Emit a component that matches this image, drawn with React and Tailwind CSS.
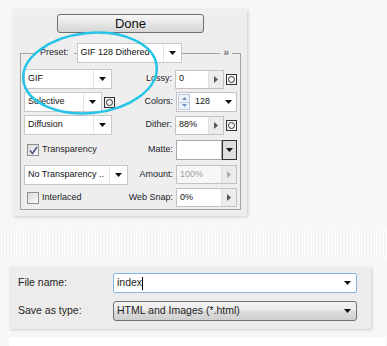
import React from "react";

const Down = ({ c = "#111" }) => (
  <svg width="7" height="4" viewBox="0 0 7 4"><polygon points="0,0 7,0 3.5,4" fill={c} /></svg>
);
const Right = ({ c = "#666" }) => (
  <svg width="4" height="7" viewBox="0 0 4 7"><polygon points="0,0 4,3.5 0,7" fill={c} /></svg>
);

function Drop({ w, text }) {
  return (
    <div className={`flex h-[20px] ${w} border border-[#c8c8c8] bg-white`}>
      <div className="flex-1 flex items-center pl-[3px] border-r border-[#e4e4e4] whitespace-nowrap overflow-hidden text-[#111]">{text}</div>
      <div className="w-[17px] flex items-center justify-center"><Down /></div>
    </div>
  );
}

function Step({ w, text, disabled }) {
  return (
    <div className={`flex h-[19px] ${w} border border-[#c2c2c2] bg-white`}>
      <div className={`flex-1 flex items-center pl-[3px] ${disabled ? "text-[#a0a0a0] bg-[#f7f7f7]" : "text-[#111]"}`}>{text}</div>
      <div className="w-[15px] flex items-center justify-center bg-[#ececec] border-l border-[#e0e0e0]"><Right c={disabled ? "#aaa" : "#555"} /></div>
    </div>
  );
}

function Circ() {
  return (
    <div className="w-[11px] h-[11px] border border-[#333] bg-[#f3f3f3] flex items-center justify-center">
      <div className="w-[7px] h-[7px] rounded-full border border-[#333]" />
    </div>
  );
}

function Check({ checked }) {
  return (
    <div className="w-[12px] h-[12px] border border-[#8e8f8f] bg-[linear-gradient(135deg,#dcdcdc,#f8f8f8)] flex items-center justify-center">
      {checked && (
        <svg width="9" height="9" viewBox="0 0 9 9"><path d="M1 4.5 L3.5 7.5 L8 1" fill="none" stroke="#4a5a88" strokeWidth="1.6" /></svg>
      )}
    </div>
  );
}

function RightCell({ label, children }) {
  return (
    <div className="ml-auto flex items-center">
      <span className="mr-[3px] text-[#1c1c2a] whitespace-nowrap">{label}</span>
      {children}
    </div>
  );
}

export default function App() {
  return (
    <div className="relative w-[387px] h-[346px] bg-[#f7f7f7] overflow-hidden font-['Liberation_Sans',Arial,sans-serif]">
      <div className="pt-[9px]">
        <div className="ml-[13px] w-[234px] h-[207px] bg-[#eeeeee] shadow-[1px_1px_3px_rgba(0,0,0,0.18)] pt-[5px] text-[9px]">
          <div className="ml-[44px] w-[147px] h-[19px] rounded-[3px] border border-[#6e6e6e] bg-[linear-gradient(#f6f6f6,#e6e6e6_50%,#d6d6d6)] flex items-center justify-center text-[13px] text-[#111]">
            Done
          </div>
          <div className="ml-[7px] mt-[20px] w-[221px] border border-[#a3a3a3] pl-[3px] pr-[3px] pb-[2px]">
            <div className="-mt-[11px] flex items-center h-[20px]">
              <span className="ml-[11px] px-[5px] h-full flex items-center bg-[#eeeeee] text-[#1c1c2a]">Preset:</span>
              <div className="ml-[3px]"><Drop w="w-[105px]" text="GIF 128 Dithered" /></div>
              <span className="ml-auto mr-[5px] px-[3px] bg-[#eeeeee] text-[#777] text-[10px] font-bold leading-none">»</span>
            </div>
            <div className="mt-[6px] flex items-center h-[20px]">
              <Drop w="w-[88px]" text="GIF" />
              <RightCell label="Lossy:">
                <Step w="w-[49px]" text="0" />
                <div className="ml-[2px]"><Circ /></div>
              </RightCell>
            </div>
            <div className="mt-[3px] flex items-center h-[20px]">
              <Drop w="w-[78px]" text="Selective" />
              <div className="ml-[2px]"><Circ /></div>
              <RightCell label="Colors:">
                <div className="flex h-[20px] w-[61px] border border-[#c2c2c2] bg-white">
                  <div className="w-[12px] ml-[1px] my-[1px] flex flex-col border border-[#b9c6dc] bg-[#eef2f9]">
                    <div className="flex-1 flex items-center justify-center border-b border-[#c8d2e4]">
                      <svg width="5" height="3" viewBox="0 0 5 3"><polygon points="0,3 5,3 2.5,0" fill="#6f8cc8" /></svg>
                    </div>
                    <div className="flex-1 flex items-center justify-center">
                      <svg width="5" height="3" viewBox="0 0 5 3"><polygon points="0,0 5,0 2.5,3" fill="#6f8cc8" /></svg>
                    </div>
                  </div>
                  <div className="flex-1 flex items-center pl-[5px] text-[#111]">128</div>
                  <div className="w-[15px] flex items-center justify-center"><Down /></div>
                </div>
              </RightCell>
            </div>
            <div className="mt-[3px] flex items-center h-[20px]">
              <Drop w="w-[88px]" text="Diffusion" />
              <RightCell label="Dither:">
                <Step w="w-[49px]" text="88%" />
                <div className="ml-[2px]"><Circ /></div>
              </RightCell>
            </div>
            <div className="mt-[5px] flex items-center h-[20px]">
              <div className="ml-[3px]"><Check checked /></div>
              <span className="ml-[3px] text-[#1c1c2a]">Transparency</span>
              <RightCell label="Matte:">
                <div className="flex h-[20px]">
                  <div className="w-[46px] border border-[#a8a8a8] bg-white" />
                  <div className="w-[15px] border border-[#333] bg-[#dedede] flex items-center justify-center"><Down /></div>
                </div>
              </RightCell>
            </div>
            <div className="mt-[4px] flex items-center h-[21px]">
              <Drop w="w-[104px]" text="No Transparency .." />
              <RightCell label="Amount:">
                <Step w="w-[61px]" text="100%" disabled />
              </RightCell>
            </div>
            <div className="mt-[3px] flex items-center h-[19px]">
              <div className="ml-[3px]"><Check /></div>
              <span className="ml-[3px] text-[#1c1c2a]">Interlaced</span>
              <RightCell label="Web Snap:">
                <Step w="w-[61px]" text="0%" />
              </RightCell>
            </div>
          </div>
        </div>
      </div>

      <div className="mt-[12px] h-[30px] bg-[repeating-linear-gradient(90deg,#f2f2f2_0px,#f2f2f2_1px,#fbfbfb_1px,#fbfbfb_3px)]" />

      <div className="mt-[9px] ml-[10px] w-[361px] h-[62px] bg-[#ececec] shadow-[1px_1px_3px_rgba(0,0,0,0.18)] px-[8px] pt-[6px] text-[10.5px] text-[#1e1e1e]">
        <div className="flex items-center h-[20px]">
          <span className="w-[95px]">File name:</span>
          <div className="w-[244px] h-[20px] border border-[#84b6e6] bg-white rounded-[2px] flex items-center pl-[3px]">
            <span>index</span>
            <span className="w-[1px] h-[13px] bg-black" />
            <span className="ml-auto mr-[5px]"><Down /></span>
          </div>
        </div>
        <div className="mt-[8px] flex items-center h-[20px]">
          <span className="w-[95px]">Save as type:</span>
          <div className="w-[244px] h-[20px] border border-[#707070] rounded-[3px] bg-[linear-gradient(#f2f2f2,#ebebeb_45%,#dddddd_50%,#cfcfcf)] flex items-center pl-[3px]">
            <span>HTML and Images (*.html)</span>
            <span className="ml-auto mr-[5px]"><Down /></span>
          </div>
        </div>
      </div>
      <div className="mt-[8px] ml-[9px] w-[376px] h-[12px] bg-white" />

      <svg className="absolute left-0 top-0 pointer-events-none" width="387" height="346">
        <ellipse cx="90" cy="73" rx="67" ry="40" fill="none" stroke="#26c4e6" strokeWidth="2.5" transform="rotate(-6 90 73)" />
      </svg>
    </div>
  );
}
